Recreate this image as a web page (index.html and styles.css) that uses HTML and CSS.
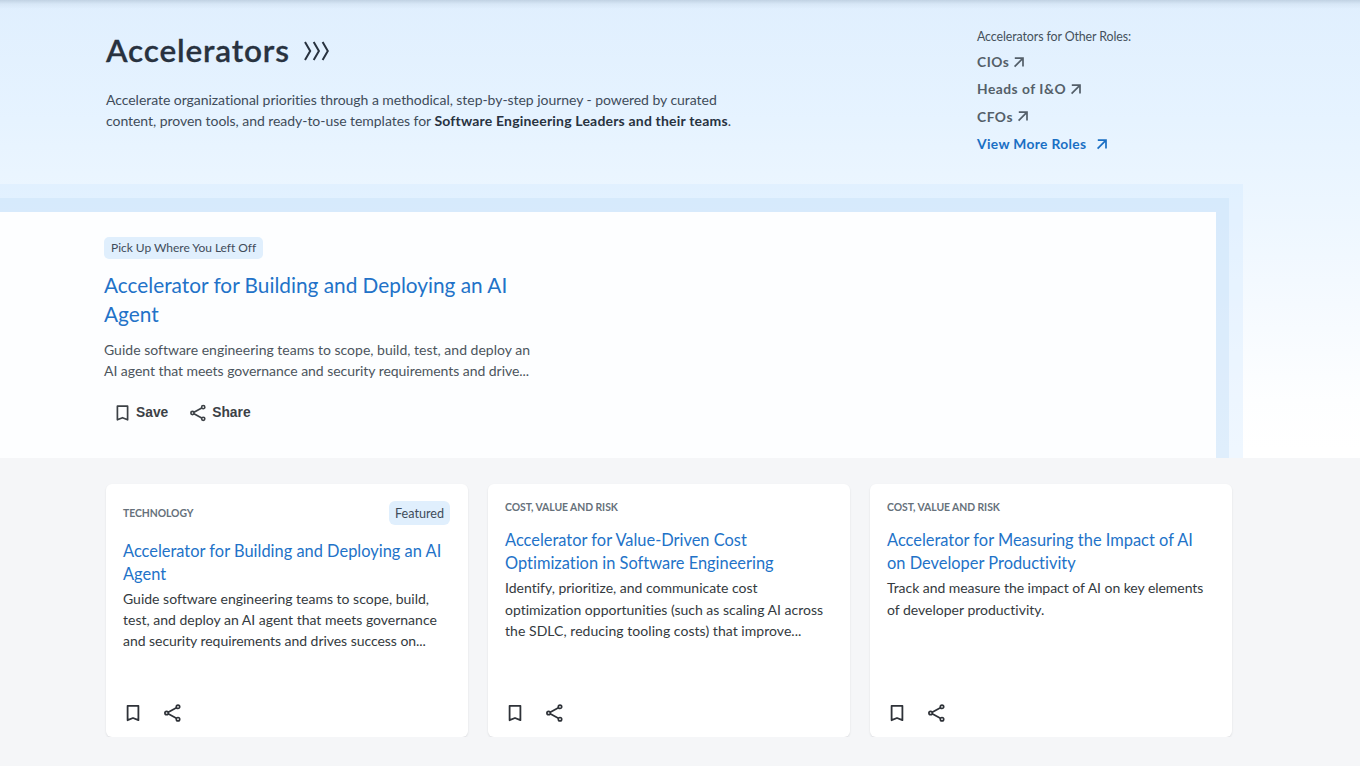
FILE: index.html
```
<!DOCTYPE html>
<html lang="en">
<head>
<meta charset="utf-8">
<title>Accelerators</title>
<link rel="stylesheet" href="styles.css">
</head>
<body>
<svg class="sprite" aria-hidden="true">
  <symbol id="bookmark" viewBox="0 0 18 18"><path d="M3.6 1.8h10.8v14.4L9 14l-5.4 2.2z" fill="none" stroke="currentColor" stroke-width="1.8" stroke-linejoin="round"/></symbol>
  <symbol id="share" viewBox="0 0 18 18"><g fill="none" stroke="currentColor" stroke-width="1.7"><circle cx="2.6" cy="9" r="1.7"/><circle cx="14" cy="2.8" r="1.7"/><circle cx="14" cy="15.2" r="1.7"/><path d="M4.2 8.2l8.2-4.5M4.2 9.8l8.2 4.5"/></g></symbol>
  <symbol id="arrow" viewBox="0 0 12 12"><path d="M1.8 2.2h8.2v8.2M9.8 2.4L1.6 10.6" fill="none" stroke="currentColor" stroke-width="1.7"/></symbol>
</svg>
<header class="hero">
  <div class="top">
    <div class="intro">
      <h1 class="title"><span>Accelerators</span>
        <svg class="chevrons" viewBox="0 0 26 20"><path d="M1 1l5.2 9L1 19M9.7 1l5.2 9-5.2 9M18.6 1l5.2 9-5.2 9" fill="none" stroke="currentColor" stroke-width="2"/></svg>
      </h1>
      <p class="lead"><span class="snug">Accelerate organizational priorities through a methodical, step-by-step journey - powered by curated</span><br><span class="snug">content, proven tools, and ready-to-use templates for </span><b>Software Engineering Leaders and their teams</b>.</p>
    </div>
    <nav class="roles">
      <span class="roles-label">Accelerators for Other Roles:</span>
      <a class="role">CIOs<svg><use href="#arrow"/></svg></a>
      <a class="role">Heads of I&amp;O<svg><use href="#arrow"/></svg></a>
      <a class="role">CFOs<svg><use href="#arrow"/></svg></a>
      <a class="role more">View More Roles<svg><use href="#arrow"/></svg></a>
    </nav>
  </div>
  <div class="band-outer"><div class="band-inner">
    <section class="resume">
      <span class="pill">Pick Up Where You Left Off</span>
      <h2 class="resume-title">Accelerator for Building and Deploying an AI<br>Agent</h2>
      <p class="resume-text">Guide software engineering teams to scope, build, test, and deploy an<br><span class="snug">AI agent that meets governance and security requirements and drive...</span></p>
      <div class="actions">
        <button><svg><use href="#bookmark"/></svg>Save</button>
        <button><svg><use href="#share"/></svg>Share</button>
      </div>
    </section>
  </div></div>
</header>
<main class="cards">
  <article class="card">
    <div class="card-head featured"><span class="tag">TECHNOLOGY</span><span class="badge">Featured</span></div>
    <h3>Accelerator for Building and Deploying an AI<br>Agent</h3>
    <p>Guide software engineering teams to scope, build,<br>test, and deploy an AI agent that meets governance<br><span class="snug">and security requirements and drives success on...</span></p>
    <div class="icons"><svg><use href="#bookmark"/></svg><svg><use href="#share"/></svg></div>
  </article>
  <article class="card">
    <div class="card-head"><span class="tag">COST, VALUE AND RISK</span></div>
    <h3>Accelerator for Value-Driven Cost<br>Optimization in Software Engineering</h3>
    <p>Identify, prioritize, and communicate cost<br>optimization opportunities (such as scaling AI across<br><span class="loose">the SDLC, reducing tooling costs) that improve...</span></p>
    <div class="icons"><svg><use href="#bookmark"/></svg><svg><use href="#share"/></svg></div>
  </article>
  <article class="card">
    <div class="card-head"><span class="tag">COST, VALUE AND RISK</span></div>
    <h3>Accelerator for Measuring the Impact of AI<br>on Developer Productivity</h3>
    <p><span class="snug">Track and measure the impact of AI on key elements</span><br>of developer productivity.</p>
    <div class="icons"><svg><use href="#bookmark"/></svg><svg><use href="#share"/></svg></div>
  </article>
</main>
</body>
</html>
```
FILE: styles.css
```
* { box-sizing: border-box; }
body { margin: 0; font-family: Lato, "Open Sans", sans-serif; font-variant-ligatures: none; background: #f5f6f8; color: #2d333a; }
h1, h2, h3, p { margin: 0; font-weight: 400; white-space: nowrap; }
.snug { letter-spacing: -.045px; }
.loose { letter-spacing: .045px; }
.sprite { display: none; }

.hero {
  height: 458px;
  overflow: hidden;
  background:
    linear-gradient(rgba(70, 95, 120, .2), rgba(70, 95, 120, .06) 4px, rgba(70, 95, 120, 0) 9px),
    linear-gradient(#e0effe 0, #e6f3ff 120px, #ecf6ff 200px, #f3f9ff 280px, #fdfeff 400px, #fff 450px);
}
.top { height: 184px; display: flex; padding-left: 106px; }
.intro { width: 871px; padding-top: 30px; }
.title { display: flex; align-items: center; gap: 14px; height: 40px; font-size: 31.5px; font-weight: 600; letter-spacing: .85px; line-height: 38px; color: #28323f; -webkit-text-stroke: .3px #28323f; }
.title span { margin-top: -1px; }
.chevrons { width: 26px; height: 20px; margin-top: 1px; }
.lead { margin-top: 19px; font-size: 14px; line-height: 21.4px; color: #3f4c5a; }
.lead b { letter-spacing: .19px; color: #28323f; }
.roles { display: flex; flex-direction: column; align-items: flex-start; padding-top: 26px; }
.roles-label { font-size: 12.4px; letter-spacing: -.1px; line-height: 22px; color: #45515c; }
.role { display: flex; align-items: center; gap: 4px; height: 27.3px; font-size: 13.8px; font-weight: 700; letter-spacing: .5px; color: #545f69; }
.role svg { width: 12px; height: 12px; }
.more { gap: 10px; letter-spacing: .35px; color: #1a6fc4; }

.band-outer { width: 1243px; padding: 14px 14px 0 0; background: rgba(205, 230, 255, .32); }
.band-inner { padding: 14px 13px 0 0; background: rgba(194, 222, 248, .36); }
.resume { height: 246px; padding: 25px 0 0 104px; background: #fdfeff; display: flex; flex-direction: column; align-items: flex-start; }
.pill { height: 22px; padding: 0 7px; border-radius: 5px; background: #e0effd; font-size: 12px; letter-spacing: -.03px; line-height: 22px; color: #3f4c5a; }
.resume-title { margin-top: 11px; font-size: 20.8px; line-height: 29px; color: #2272c8; }
.resume-text { margin-top: 11px; font-size: 14px; letter-spacing: .01px; line-height: 21.3px; color: #4c555d; }
.actions { display: flex; gap: 22px; margin: 22px 0 0 10px; }
.actions button { display: flex; align-items: center; gap: 5px; padding: 0; border: 0; background: none; font: 700 13.8px "Liberation Sans", sans-serif; color: #3c4146; }
.actions svg { width: 17px; height: 18px; }

.cards { display: grid; grid-template-columns: repeat(3, 362px); gap: 20px; padding: 26px 0 0 106px; }
.card { height: 253px; padding: 16px 18px 15px 17px; display: flex; flex-direction: column; border-radius: 6px; background: #fff; box-shadow: 0 1px 2px rgba(40, 50, 60, .12); }
.card-head { display: flex; justify-content: space-between; align-items: center; height: 14px; margin-bottom: 14.4px; }
.card-head.featured { height: 26px; margin-bottom: 12.6px; }
.tag { font-size: 10.4px; font-weight: 700; letter-spacing: -.06px; color: #66717b; }
.badge { height: 24px; padding: 0 6px; border-radius: 6px; background: #e0effd; font-size: 12.6px; line-height: 25px; color: #3f4c5a; }
h3 { font-size: 16.4px; letter-spacing: .01px; line-height: 23px; color: #2272c8; }
.card p { margin-top: 3px; font-size: 14px; line-height: 21.4px; color: #343a40; }
.icons { display: flex; gap: 22px; margin-top: auto; padding-left: 1px; color: #2e3238; }
.icons svg { width: 18px; height: 18px; }
```
